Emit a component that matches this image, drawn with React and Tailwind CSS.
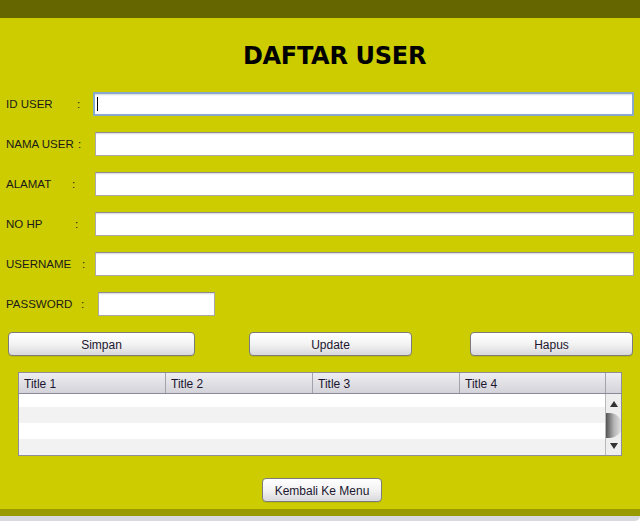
const fields = [
  { label: 'ID USER', colon: 71, left: 93, width: 541, focused: true },
  { label: 'NAMA USER', colon: 72, left: 95, width: 539 },
  { label: 'ALAMAT', colon: 66, left: 95, width: 539 },
  { label: 'NO HP', colon: 69, left: 95, width: 539 },
  { label: 'USERNAME', colon: 76, left: 95, width: 539 },
  { label: 'PASSWORD', colon: 75, left: 98, width: 117 },
]

const sans = { fontFamily: '"Liberation Sans", Arial, sans-serif' }

const TextField = ({ focused }) => (
  <div
    className={`relative h-full w-full bg-white ${
      focused
        ? 'border-2 border-[#89a9cc]'
        : 'border border-[#a9a9a9] border-t-[#8c8c8c]'
    }`}
  >
    <div className="absolute inset-x-0 top-0 h-[2px] bg-gradient-to-b from-[#d8d8d8] to-white" />
    {focused && <div className="absolute left-[2px] top-[3px] h-[14px] w-px bg-black" />}
  </div>
)

const Button = ({ children, className = '' }) => (
  <button
    type="button"
    className={`flex h-[24px] items-center justify-center rounded-[4px] border border-[#7b7b7b] bg-gradient-to-b from-white via-[#f3f3f3] to-[#d9d9dc] pt-px text-[12px] text-[#1c1630] shadow-[0_1px_0_rgba(0,0,0,0.08)] ${className}`}
    style={sans}
  >
    {children}
  </button>
)

const columns = [
  { title: 'Title 1', width: 147 },
  { title: 'Title 2', width: 147 },
  { title: 'Title 3', width: 147 },
  { title: 'Title 4', width: 146 },
]

const UserTable = () => (
  <div className="ml-[18px] flex h-[84px] w-[604px] flex-col border border-[#8e8e98] bg-white" style={sans}>
    <div className="flex h-[21px] border-b border-[#8a8a96] bg-gradient-to-b from-[#eeeef1] via-[#e0e0e5] to-[#d3d3d9]">
      {columns.map((col) => (
        <div
          key={col.title}
          className="flex h-full items-center border-r border-[#a3a3ad] pl-[5px] pt-px text-[12px] text-[#1c1630]"
          style={{ width: col.width }}
        >
          {col.title}
        </div>
      ))}
      <div className="flex-1" />
    </div>
    <div className="flex flex-1 overflow-hidden">
      <div className="flex flex-1 flex-col">
        <div className="h-[13px] bg-white" />
        <div className="h-[16px] bg-[#f2f2f2]" />
        <div className="h-[16px] bg-white" />
        <div className="h-[16px] bg-[#f2f2f2]" />
      </div>
      <div className="relative flex w-[16px] flex-col items-center border-l border-[#b8b8b8] bg-[#eeeeee]">
        <div className="mt-[7px] h-0 w-0 border-x-[4px] border-b-[6px] border-x-transparent border-b-[#333]" />
        <div className="mt-[6px] h-[25px] w-[16px] rounded-r-full bg-gradient-to-r from-[#555] via-[#b5b5b5] to-[#e6e6e6]" />
        <div className="mt-auto mb-[6px] h-0 w-0 border-x-[4px] border-t-[6px] border-x-transparent border-t-[#333]" />
      </div>
    </div>
  </div>
)

export default function App() {
  return (
    <div className="flex h-[526px] w-[640px] flex-col bg-white">
      <div className="flex h-[509px] flex-col bg-[#cccc00]">
        <div className="h-[18px] bg-[#666600]" />

        <h1
          className="mt-[24px] pl-[29px] text-center text-[24px] font-bold leading-[28px] tracking-[-0.3px] text-black"
          style={{ fontFamily: '"DejaVu Sans", Verdana, sans-serif' }}
        >
          DAFTAR USER
        </h1>

        <div className="mt-[22px] flex flex-col gap-4">
          {fields.map((field) => (
            <div key={field.label} className="flex h-[24px] items-center">
              <div
                className="flex shrink-0 pl-[6px] pt-[2px] text-[11.5px] text-[#1a1a1a]"
                style={{ ...sans, width: field.left }}
              >
                <span style={{ width: field.colon }}>{field.label}</span>
                <span>:</span>
              </div>
              <div className="h-full" style={{ width: field.width }}>
                <TextField focused={field.focused} />
              </div>
            </div>
          ))}

          <div className="flex">
            <Button className="ml-[8px] w-[187px]">Simpan</Button>
            <Button className="ml-[54px] w-[163px]">Update</Button>
            <Button className="ml-[58px] w-[163px]">Hapus</Button>
          </div>

          <UserTable />
        </div>

        <div className="mt-[22px] flex">
          <Button className="ml-[262px] w-[120px]">Kembali Ke Menu</Button>
        </div>
      </div>
      <div className="h-[7px] bg-[#999900]" />
      <div className="h-[5px] rounded-br-[6px] bg-[#d6d9de]" />
    </div>
  )
}
